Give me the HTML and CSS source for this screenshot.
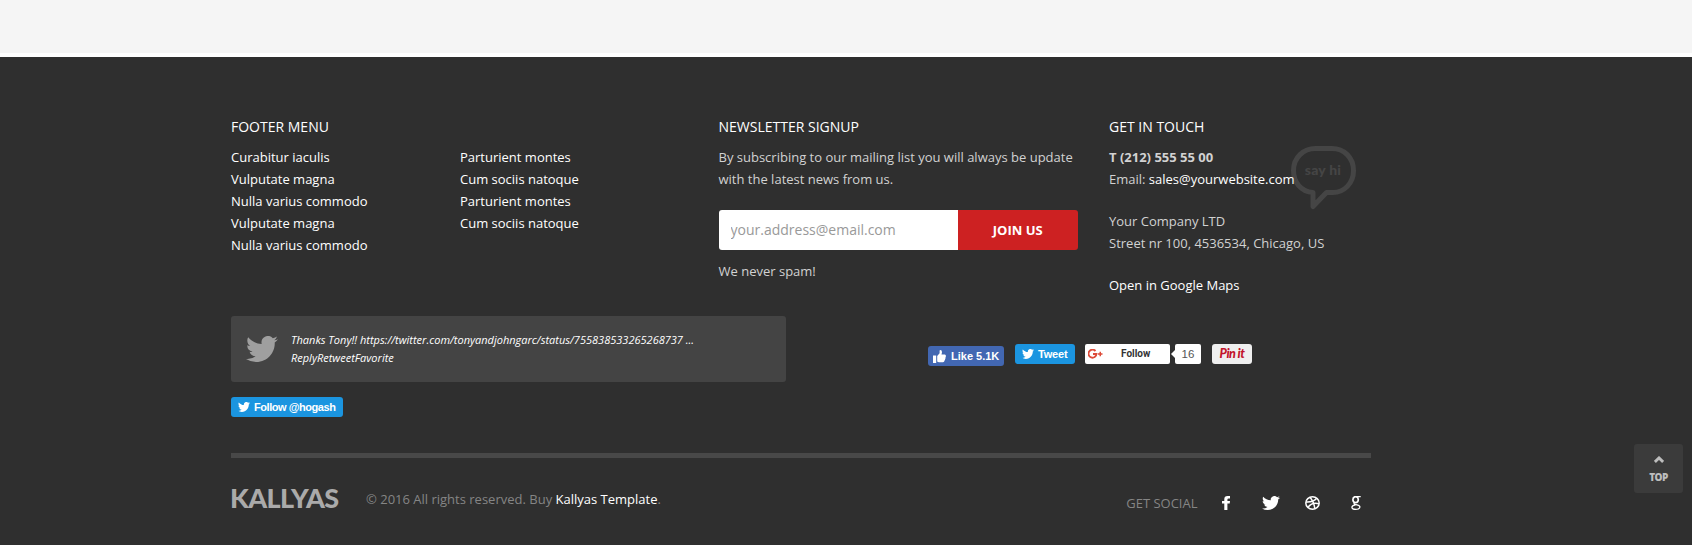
FILE: index.html
```html
<!DOCTYPE html>
<html lang="en">
<head>
<meta charset="utf-8">
<title>Kallyas</title>
<link rel="stylesheet" href="styles.css">
</head>
<body>
<svg class="defs" width="0" height="0">
  <symbol id="bird" viewBox="0 2.2 24 19.6" preserveAspectRatio="none"><path d="M23.953 4.57a10 10 0 01-2.825.775 4.958 4.958 0 002.163-2.723c-.951.555-2.005.959-3.127 1.184a4.92 4.92 0 00-8.384 4.482C7.69 8.095 4.067 6.13 1.64 3.162a4.822 4.822 0 00-.666 2.475c0 1.71.87 3.213 2.188 4.096a4.904 4.904 0 01-2.228-.616v.06a4.923 4.923 0 003.946 4.827 4.996 4.996 0 01-2.212.085 4.936 4.936 0 004.604 3.417 9.867 9.867 0 01-6.102 2.105c-.39 0-.779-.023-1.17-.067a13.995 13.995 0 007.557 2.209c9.053 0 13.998-7.496 13.998-13.985 0-.21 0-.42-.015-.63A9.935 9.935 0 0024 4.59z"/></symbol>
</svg>
<div class="strip"></div>
<footer class="footer">
  <div class="columns">
    <section class="menu">
      <h3>FOOTER MENU</h3>
      <div class="lists">
        <ul><li><a>Curabitur iaculis</a></li><li><a>Vulputate magna</a></li><li><a>Nulla varius commodo</a></li><li><a>Vulputate magna</a></li><li><a>Nulla varius commodo</a></li></ul>
        <ul><li><a>Parturient montes</a></li><li><a>Cum sociis natoque</a></li><li><a>Parturient montes</a></li><li><a>Cum sociis natoque</a></li></ul>
      </div>
    </section>
    <section class="newsletter">
      <h3>NEWSLETTER SIGNUP</h3>
      <p>By subscribing to our mailing list you will always be update<br>with the latest news from us.</p>
      <form class="signup"><input type="text" placeholder="your.address@email.com"><button type="button">JOIN US</button></form>
      <p>We never spam!</p>
    </section>
    <section class="contact">
      <h3>GET IN TOUCH</h3>
      <p><strong>T (212) 555 55 00</strong><br>Email: <a>sales@yourwebsite.com</a></p>
      <p>Your Company LTD<br>Street nr 100, 4536534, Chicago, US</p>
      <p><a>Open in Google Maps</a></p>
      <div class="sayhi">
        <svg width="65" height="64" viewBox="0 0 65 64" fill="none" stroke="#454545" stroke-width="5" stroke-linejoin="round"><path d="M24.500 2.500H41C53 2.500 62.500 11.500 62.500 24.500S53 46.500 42 46.500H35.500L22 60.500V46.500C10 46 2.500 36 2.500 24.500C2.500 11.500 12.500 2.500 24.500 2.500Z"/></svg>
        <span>say hi</span>
      </div>
    </section>
  </div>
  <div class="feed">
    <div class="tweet">
      <svg class="tweet-bird" width="32" height="26"><use href="#bird"/></svg>
      <p>Thanks Tony!! https://twitter.com/tonyandjohngarc/status/755838533265268737 ...<br>ReplyRetweetFavorite</p>
    </div>
    <div class="share">
      <a class="pill like"><svg width="13" height="13" viewBox="0 0 13 13" fill="#fff"><path d="M0 5.500h3.200V13H0zM4.200 6 6.600 3.300V.7Q6.600 0 7.400 0 9 0 9 2.200L8.500 4.600H11.800Q13 4.800 12.900 6 13 6.800 12.500 7.200 12.900 8.300 12.100 9 12.300 10.200 11.500 10.600 11.400 12.200 10 12.300H6Q5 12.300 4.200 11.600Z"/></svg>Like 5.1K</a>
      <a class="pill post"><svg width="12" height="10"><use href="#bird"/></svg>Tweet</a>
      <a class="gplus"><svg width="15" height="10" viewBox="0 0 15 10" fill="none" stroke="#dd4b39" stroke-width="1.900"><path d="M7.500 2A4 4 0 1 0 8.500 5H5"/><path d="M10 5H14.500M12.250 2.750V7.250" stroke-width="1.500"/></svg><span>Follow</span></a>
      <span class="count">16</span>
      <a class="pin"><span>Pin it</span></a>
    </div>
  </div>
  <a class="pill follow"><svg width="12" height="10"><use href="#bird"/></svg>Follow @hogash</a>
  <div class="bottom">
    <div class="logo">KALLYAS</div>
    <p class="copy">© 2016 All rights reserved. Buy <a>Kallyas Template</a>.</p>
    <div class="social">
      <span>GET SOCIAL</span>
      <svg class="fb" width="8" height="14" viewBox="0 0 8 14" fill="#fff"><path d="M8 0V2.500H6.600Q5.400 2.500 5.400 3.500V5H8L7.700 7.500H5.400V14H2.300V7.500H0V5H2.300V3Q2.300 0 5.500 0Z"/></svg>
      <svg class="tw" width="18" height="14"><use href="#bird"/></svg>
      <svg class="dr" width="15" height="14" viewBox="0 0 15 14" fill="none" stroke="#fff" stroke-width="1.500"><ellipse cx="7.500" cy="7" rx="6.700" ry="6.200"/><path d="M5 1.300Q9 6 9.800 12.700M1 6Q8 6.500 11.800 2.200M3 11.400Q6.500 5.800 14 7.700"/></svg>
      <svg class="gg" width="10" height="14" viewBox="0 0 10 14" fill="none" stroke="#fff"><ellipse cx="4.600" cy="3.700" rx="2.700" ry="3" stroke-width="1.700"/><path d="M4.500.7H9.700M3.500 6.500Q2 8 5 8.600 9 9.500 8.900 11 8.600 13.300 4.800 13.300 .9 13.300 .9 11.300 .9 9.300 4.600 8.800" stroke-width="1.300"/></svg>
    </div>
  </div>
</footer>
<a class="top"><svg width="10" height="7" viewBox="0 0 10 7" fill="none" stroke="#bdbdbd" stroke-width="2.800"><path d="M.9 5.900 5 1.900 9.100 5.900"/></svg>TOP</a>
</body>
</html>
```
FILE: styles.css
```css
* { box-sizing: border-box; }
body { margin: 0; height: 545px; overflow: hidden; background: #2f2f2f; color: #d2d2d2; font: 13px/22px "Open Sans", sans-serif; }
h3, p, ul { margin: 0; padding: 0; list-style: none; }
a { color: #fff; }
.defs { position: absolute; }
.strip { height: 57px; background: #f5f5f5; border-bottom: 4px solid #fff; }
.footer { width: 1371px; height: 488px; padding: 60px 0 0 231px; background: #2f2f2f; }
.columns { display: grid; grid-template-columns: 487.500px 390px 262.500px; height: 199px; }
h3 { color: #fff; font-size: 14px; font-weight: 400; line-height: 20px; margin-bottom: 9px; }
.lists { display: grid; grid-template-columns: 229px 1fr; }
.signup { display: flex; width: 359.500px; height: 40px; margin: 20px 0 10px; }
.signup input { width: 239px; border: 0; border-radius: 3px 0 0 3px; padding: 0 12px 2px; background: #fff; font: 14px "Open Sans", sans-serif; }
.signup input::placeholder { color: #999; opacity: 1; }
.signup button { flex: 1; border: 0; border-radius: 0 3px 3px 0; background: #cd2122; color: #fff; font: bold 13px "Open Sans", sans-serif; padding: 0; }
.contact { position: relative; padding-left: .5px; }
.contact p { margin-bottom: 20px; position: relative; z-index: 1; }
.sayhi { position: absolute; left: 182px; top: 29px; width: 65px; height: 64px; }
.sayhi svg { display: block; }
.sayhi span { position: absolute; left: 0; top: 13px; width: 65px; text-align: center; color: #454545; font: 900 14px/22px Lato, sans-serif; letter-spacing: .2px; }
.feed { display: flex; height: 66px; }
.tweet { width: 555px; display: flex; gap: 13px; padding: 15px 15px; border-radius: 3px; background: #444; }
.tweet-bird { fill: #9f9f9f; margin-top: 5px; }
.tweet p { color: #fff; font: italic 11px/18px "Open Sans", sans-serif; }
.share { display: flex; align-items: flex-start; padding: 28px 0 0 142px; }
.pill { display: flex; align-items: center; height: 20px; border-radius: 3px; background: #1b95e0; fill: #fff; color: #fff; font: bold 11px/20px "Liberation Sans", Arial, sans-serif; white-space: nowrap; }
.like { width: 76px; margin: 2px 11px 0 0; padding-left: 5px; gap: 5px; background: #4267b2; }
.post { width: 60px; margin-right: 10px; padding-left: 7px; gap: 4px; letter-spacing: -.2px; }
.gplus { display: flex; align-items: center; width: 85px; height: 20px; border-radius: 2px; background: #fff; padding-left: 3px; }
.gplus span { margin-left: 18px; color: #333; font: bold 10px/20px Roboto, sans-serif; }
.count { position: relative; width: 26px; height: 20px; margin: 0 11px 0 5px; border-radius: 2px; background: #fff; color: #555; font: 11.500px/20px "Liberation Sans", sans-serif; text-align: center; }
.count::before { content: ""; position: absolute; left: -4px; top: 6px; border: 4px solid transparent; border-left: 0; border-right-color: #fff; }
.pin { width: 40px; height: 20px; border-radius: 3px; background: #efefef; color: #c2142b; text-align: center; font: italic 900 12.500px/19px Lato, sans-serif; letter-spacing: -.5px; }
.follow { width: 112px; margin-top: 15px; padding-left: 7px; gap: 4px; letter-spacing: -.45px; }
.bottom { display: flex; height: 92px; margin-top: 36px; border-top: 5px solid #484848; }
.logo { width: 135px; padding-top: 25px; color: #aaa; font: 900 27px/30px Lato, sans-serif; letter-spacing: -.6px; text-indent: -1px; }
.copy { padding-top: 30px; color: #858585; }
.social { display: flex; align-items: flex-start; margin-left: auto; padding: 38px 10px 0 0; color: #858585; }
.social span { line-height: 14px; margin-right: 24.500px; }
.social .fb { margin-right: 32px; }
.social .tw { fill: #fff; margin-right: 25px; }
.social .dr { margin-right: 31px; }
.top { position: absolute; left: 1634px; top: 444px; width: 49px; height: 49px; border-radius: 3px; background: #3b3b3b; color: #bdbdbd; display: flex; flex-direction: column; align-items: center; padding-top: 12px; gap: 5px; font: 800 10px/18px "Open Sans", sans-serif; letter-spacing: -.5px; }
```
